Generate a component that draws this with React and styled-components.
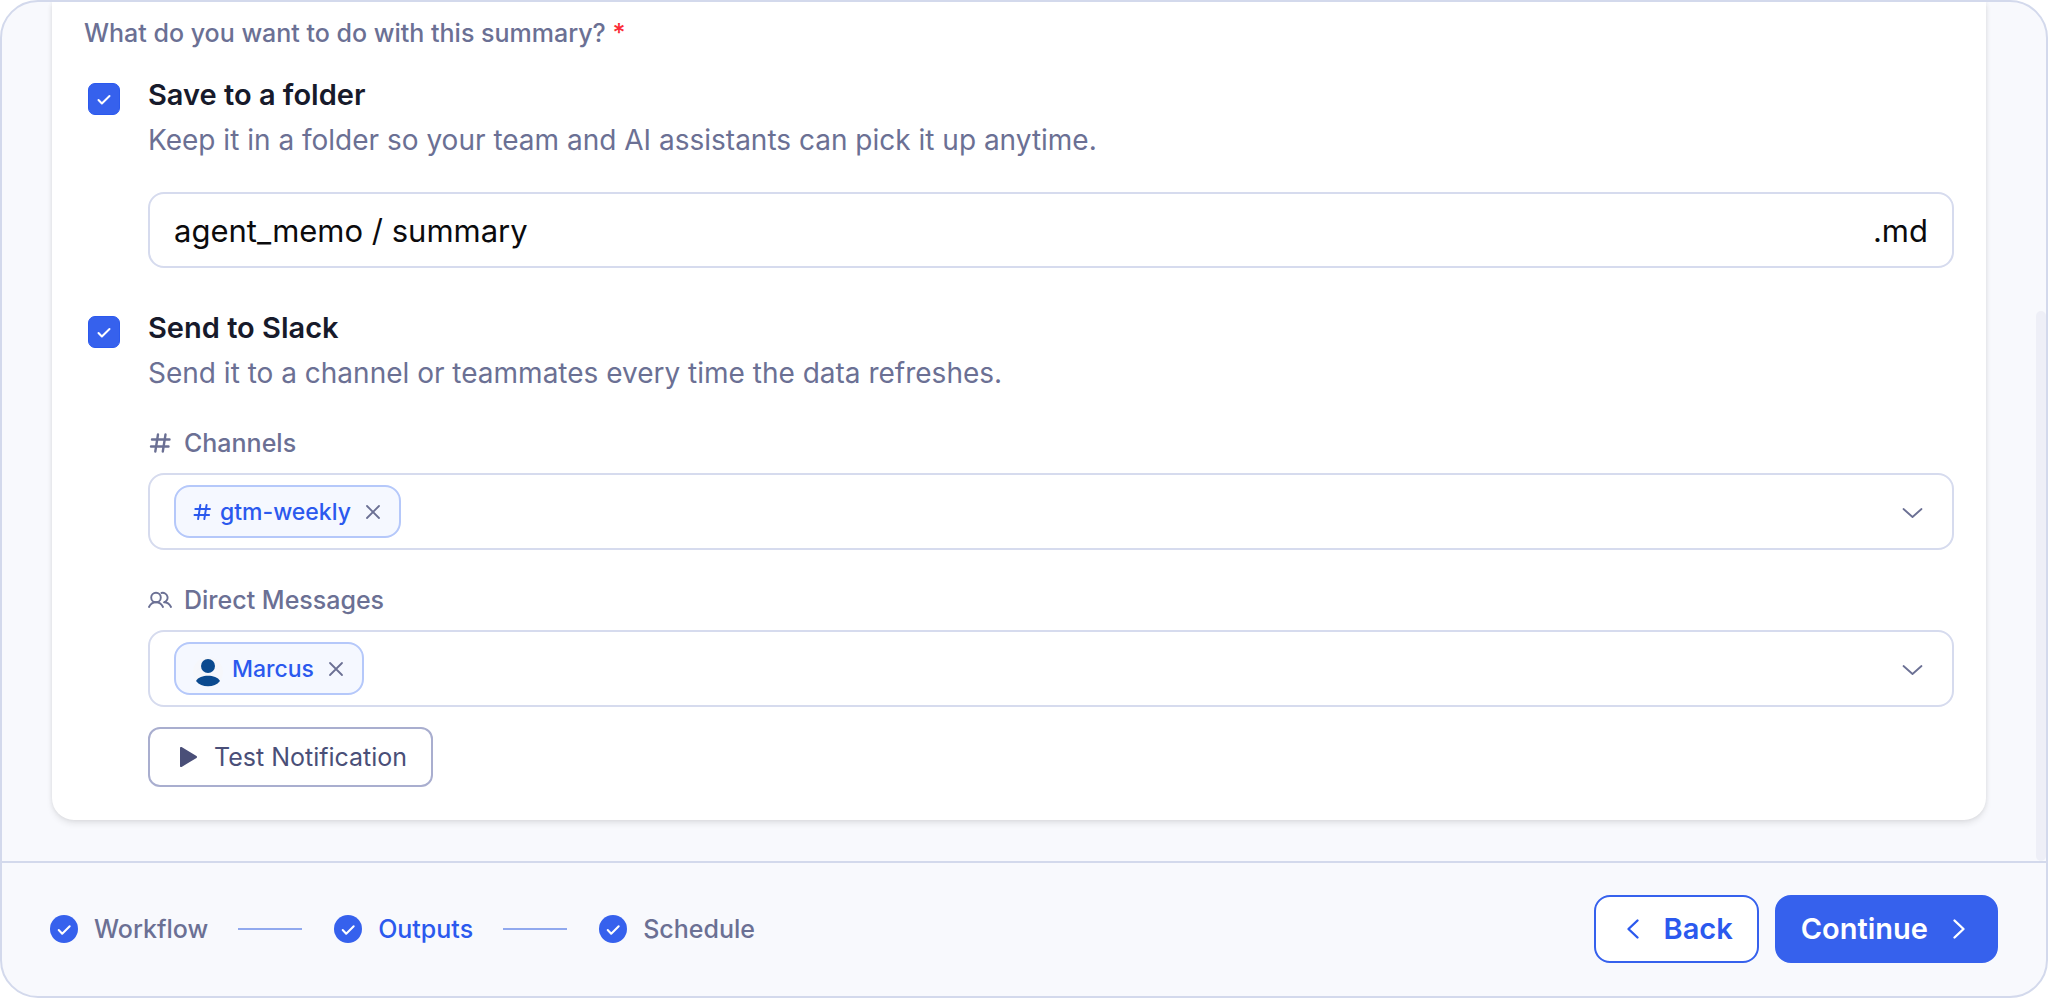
import React, {useState} from 'react';
import styled, {createGlobalStyle} from "styled-components";

const GlobalStyle = createGlobalStyle`
  * {
    box-sizing: border-box;
  }
  body {
    margin: 0;
    background: #fff;
    font-family: Inter, sans-serif;
    color: #6b7094;
  }
  button, input {
    font-family: inherit;
  }
`

const Window = styled.div`
  display: flex;
  flex-direction: column;
  height: 100vh;
  border: 2px solid #d3d9ec;
  border-radius: 38px;
  background: #f8f9fd;
  overflow: hidden;
`

const Body = styled.main`
  flex: 1;
  display: flex;
  align-items: flex-start;
  justify-content: space-between;
  padding-left: 50px;
  overflow: hidden;
`

const Card = styled.section`
  flex: 1;
  padding: 13px 32px 33px;
  border-radius: 0 0 22px 22px;
  background: #fff;
  box-shadow: 0 4px 6px rgba(0, 0, 0, 0.08), 0 0 4px rgba(0, 0, 0, 0.08);
`

const Scrollbar = styled.div`
  align-self: flex-end;
  width: 10px;
  height: 64%;
  margin-left: 50px;
  border-radius: 5px;
  background: #eeeff7;
`

const Question = styled.h2`
  margin: 0 0 30px;
  font-size: 25px;
  line-height: 36px;
  font-weight: 500;
`

const Required = styled.span`
  color: #fb2c36;
`

const Option = styled.div`
  display: grid;
  grid-template-columns: 32px 1fr;
  column-gap: 28px;
  padding-left: 4px;
  margin-bottom: ${props => props.$last ? 0 : 46}px;
`

const CheckWrap = styled.span`
  display: grid;
  width: 32px;
  height: 32px;
  margin-top: 2px;

  > * {
    grid-area: 1 / 1;
  }
  svg {
    place-self: center;
    pointer-events: none;
  }
`

const CheckInput = styled.input`
  appearance: none;
  width: 32px;
  height: 32px;
  margin: 0;
  border: 1px solid #2b59ee;
  border-radius: 7px;
  background: #fff;
  cursor: pointer;

  &:checked {
    background: #3661ed;
  }
`

const OptionTitle = styled.label`
  display: block;
  color: #171a2b;
  font-size: 29px;
  line-height: 28px;
  font-weight: 600;
`

const OptionText = styled.p`
  margin: 13px 0 34px;
  font-size: 28px;
  line-height: 36px;
`

const Field = styled.div`
  display: flex;
  align-items: center;
  height: 76px;
  padding: 0 24px;
  border: 2px solid #d6dbee;
  border-radius: 16px;
  background: #fff;
`

const TagField = styled(Field)`
  height: 77px;
`

const PathInput = styled.input`
  flex: 1;
  min-width: 0;
  padding: 0;
  border: 0;
  outline: none;
  background: none;
  color: #0b0b0d;
  font-size: 31px;
`

const Suffix = styled.span`
  color: #0b0b0d;
  font-size: 31px;
`

const FieldLabel = styled.h3`
  display: flex;
  align-items: center;
  gap: 12px;
  margin: ${props => props.$first ? 0 : 32}px 0 12px;
  font-size: 25px;
  line-height: 36px;
  font-weight: 500;
`

const Chip = styled.span`
  display: flex;
  align-items: center;
  gap: 8px;
  height: 53px;
  padding: 0 12px 0 16px;
  border: 2px solid #b5c8fa;
  border-radius: 16px;
  background: #f5f8ff;
  color: #2b59ee;
  font-size: 23px;
  font-weight: 500;
`

const IconButton = styled.button`
  display: flex;
  padding: 0;
  border: 0;
  background: none;
  color: #6b7094;
  cursor: pointer;
`

const Toggle = styled(IconButton)`
  margin-left: auto;
`

const TestButton = styled.button`
  display: flex;
  align-items: center;
  gap: 16px;
  height: 60px;
  margin-top: 20px;
  padding: 0 24px 0 28px;
  border: 2px solid #a9aecf;
  border-radius: 12px;
  background: #fff;
  color: #4a4f78;
  font-size: 25px;
  font-weight: 400;
`

const Footer = styled.footer`
  display: flex;
  align-items: center;
  justify-content: space-between;
  height: 135px;
  padding: 0 48px 2px;
  border-top: 2px solid #d3d9ec;
`

const Steps = styled.ol`
  display: flex;
  align-items: center;
  margin: 0;
  padding: 0;
  list-style: none;
`

const Step = styled.li`
  display: flex;
  align-items: center;
  gap: 16px;
  color: ${props => props.$active ? "#2b59ee" : "#6b7094"};
  font-size: 25px;
  font-weight: 500;

  &:not(:first-child)::before {
    content: "";
    width: 64px;
    height: 2px;
    margin: 0 16px 0 30px;
    background: #91a9ee;
  }
`

const Actions = styled.div`
  display: flex;
  gap: 16px;
`

const NavButton = styled.button`
  display: flex;
  align-items: center;
  gap: 16px;
  height: 68px;
  padding: 0 24px;
  border: 2px solid #3661ed;
  border-radius: 16px;
  background: ${props => props.$primary ? "#3661ed" : "#fff"};
  color: ${props => props.$primary ? "#fff" : "#2b59ee"};
  font-size: 29px;
  font-weight: 600;
`

const Line = ({d, size, stroke = 2}) => (
    <svg width={size} height={size} viewBox={`0 0 ${size} ${size}`} fill="none" stroke="currentColor"
         strokeWidth={stroke} strokeLinecap="round" strokeLinejoin="round" aria-hidden="true">
        <path d={d}/>
    </svg>
)

const Close = () => <Line size={28} stroke={1.8} d="M8 8l12 12M20 8 8 20"/>
const Down = () => <Line size={32} stroke={1.8} d="M7.500 13l9 8 9-8"/>
const Left = () => <Line size={28} stroke={2.4} d="M17.5 5.5 8.5 14l9 8.500"/>
const Right = () => <Line size={28} stroke={2.4} d="M10.5 5.5l9 8.500-9 8.500"/>

const Hash = ({size}) => (
    <svg width={size} height={size} viewBox="0 0 24 24" fill="none" stroke="currentColor"
         strokeWidth="2.4" strokeLinecap="round" aria-hidden="true">
        <path d="M4 8.500h17.500M3 15.500h17.500M10 3.500l-2.700 17M17.500 3.500l-2.700 17"/>
    </svg>
)

const People = () => (
    <svg width="24" height="24" viewBox="0 0 24 24" fill="none" stroke="currentColor"
         strokeWidth="1.9" strokeLinecap="round" strokeLinejoin="round" aria-hidden="true">
        <circle cx="8" cy="9.5" r="4.800"/>
        <path d="M1 19c1.500-3 4-4.700 7-4.700s5.500 1.700 7 4.700"/>
        <path d="M13.500 5a4.800 4.800 0 1 1 2.500 9.300c3 0 5.500 1.700 7 4.700"/>
    </svg>
)

const Avatar = () => (
    <svg width="32" height="38" viewBox="0 0 32 38" fill="#0b4a8f" aria-hidden="true">
        <circle cx="16" cy="22" r="15" fill="#f6f7fb"/>
        <circle cx="16" cy="16" r="7"/>
        <path d="M4 31c2-3.800 7-5.300 12-5.300S26 27.200 28 31c-3 3.800-7 5.300-12 5.300S7 34.800 4 31z"/>
    </svg>
)

const Play = () => (
    <svg width="20" height="24" viewBox="0 0 20 24" fill="currentColor" aria-hidden="true">
        <path d="M2 3v18c0 1 .800 1.400 1.600.900l14.900-9c.700-.500.700-1.300 0-1.800L3.600 2.100C2.800 1.600 2 2 2 3z"/>
    </svg>
)

const DoneIcon = () => (
    <svg width="28" height="28" viewBox="0 0 28 28" fill="none" aria-hidden="true">
        <circle cx="14" cy="14" r="14" fill="#3661ed"/>
        <path d="M8.700 15l3.500 3.800 7.500-7.600" stroke="#fff" strokeWidth="2" strokeLinecap="round" strokeLinejoin="round"/>
    </svg>
)

const Checkbox = ({id}) => {
    const [checked, setChecked] = useState(true)
    return (
        <CheckWrap>
            <CheckInput id={id} type="checkbox" checked={checked} onChange={() => setChecked(!checked)}/>
            <svg width="16" height="16" viewBox="0 0 16 16" fill="none" stroke="#fff"
                 strokeWidth="2" strokeLinecap="round" strokeLinejoin="round" aria-hidden="true">
                <path d="M2.500 9l3.400 3.500L13.500 5"/>
            </svg>
        </CheckWrap>
    )
}

const App = () => {
    const [path, setPath] = useState("agent_memo / summary")
    return (
        <>
            <GlobalStyle/>
            <Window>
                <Body>
                    <Card>
                        <Question>What do you want to do with this summary? <Required>*</Required></Question>
                        <Option>
                            <Checkbox id="save"/>
                            <div>
                                <OptionTitle htmlFor="save">Save to a folder</OptionTitle>
                                <OptionText>Keep it in a folder so your team and AI assistants can pick it up anytime.</OptionText>
                                <Field>
                                    <PathInput aria-label="File path" value={path} onChange={e => setPath(e.target.value)}/>
                                    <Suffix>.md</Suffix>
                                </Field>
                            </div>
                        </Option>
                        <Option $last>
                            <Checkbox id="slack"/>
                            <div>
                                <OptionTitle htmlFor="slack">Send to Slack</OptionTitle>
                                <OptionText>Send it to a channel or teammates every time the data refreshes.</OptionText>
                                <FieldLabel $first><Hash size={24}/>Channels</FieldLabel>
                                <TagField>
                                    <Chip>
                                        <Hash size={20}/>
                                        gtm-weekly
                                        <IconButton aria-label="Remove gtm-weekly"><Close/></IconButton>
                                    </Chip>
                                    <Toggle aria-label="Open channels"><Down/></Toggle>
                                </TagField>
                                <FieldLabel><People/>Direct Messages</FieldLabel>
                                <TagField>
                                    <Chip>
                                        <Avatar/>
                                        Marcus
                                        <IconButton aria-label="Remove Marcus"><Close/></IconButton>
                                    </Chip>
                                    <Toggle aria-label="Open people"><Down/></Toggle>
                                </TagField>
                                <TestButton><Play/>Test Notification</TestButton>
                            </div>
                        </Option>
                    </Card>
                    <Scrollbar/>
                </Body>
                <Footer>
                    <Steps>
                        <Step><DoneIcon/>Workflow</Step>
                        <Step $active><DoneIcon/>Outputs</Step>
                        <Step><DoneIcon/>Schedule</Step>
                    </Steps>
                    <Actions>
                        <NavButton><Left/>Back</NavButton>
                        <NavButton $primary>Continue<Right/></NavButton>
                    </Actions>
                </Footer>
            </Window>
        </>
    );
};

export default App;
